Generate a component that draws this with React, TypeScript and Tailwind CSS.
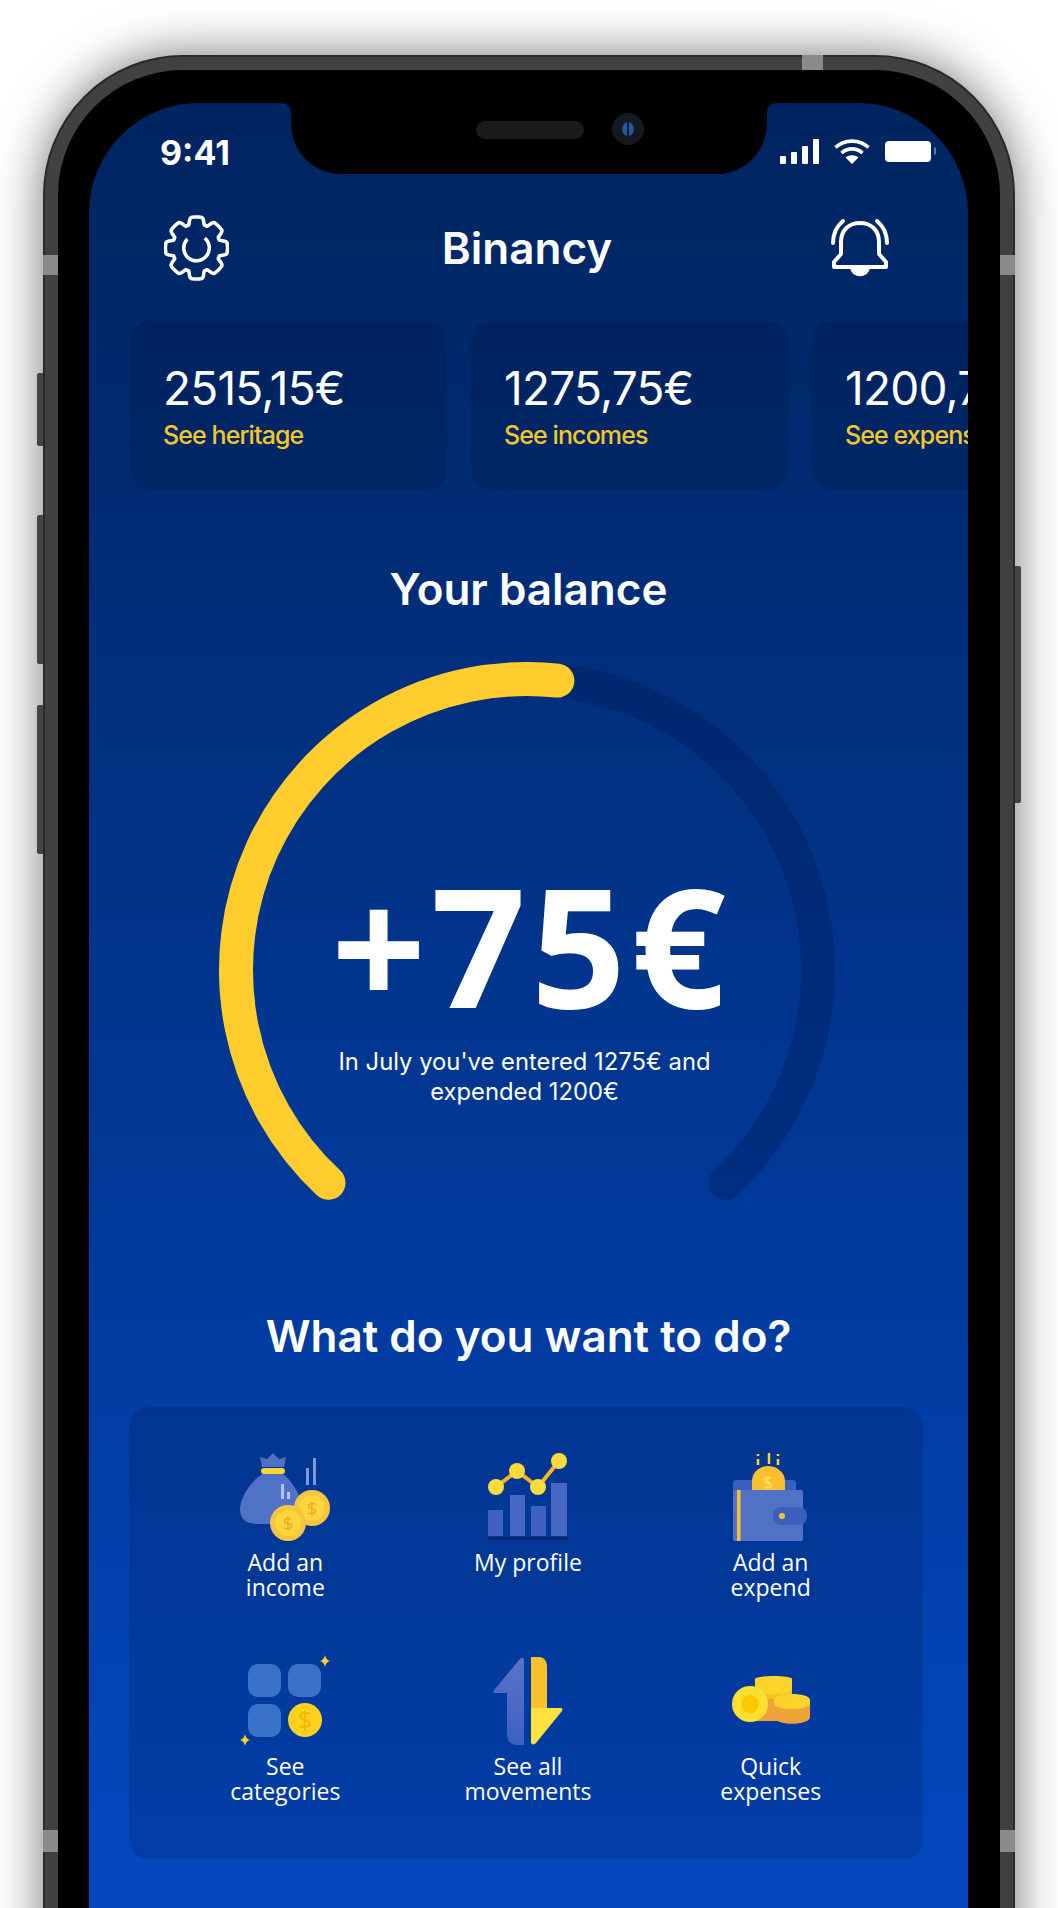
const cards = [
  { value: "2515,15€", label: "See heritage" },
  { value: "1275,75€", label: "See incomes" },
  { value: "1200,75€", label: "See expenses" },
];

// 8 flat rounded teeth on a ring, top tooth on the vertical axis
function gearPath(cx: number, cy: number) {
  const points: string[] = [];
  for (let i = 0; i < 320; i++) {
    const a = (i / 320) * Math.PI * 2;
    const t = Math.min(1, Math.max(0, (Math.abs(Math.cos(4 * a)) - 0.2) / 0.6));
    const r = 24.5 + 7 * t * t * (3 - 2 * t);
    points.push(`${(cx + r * Math.sin(a)).toFixed(2)} ${(cy - r * Math.cos(a)).toFixed(2)}`);
  }
  return `M${points.join("L")}Z`;
}

function polar(angle: number) {
  const a = (angle * Math.PI) / 180;
  return `${(323 + 291 * Math.sin(a)).toFixed(1)} ${(308 - 291 * Math.cos(a)).toFixed(1)}`;
}

function GearIcon() {
  return (
    <svg width="65" height="66" viewBox="0 0 66 66" fill="none" stroke="white" strokeWidth="3.6">
      <path d={gearPath(33, 33)} strokeLinejoin="round" />
      <circle cx="33" cy="33" r="13" strokeDasharray="62 20" transform="rotate(-50 33 33)" />
    </svg>
  );
}

function BellIcon() {
  return (
    <svg width="58" height="60" viewBox="0 0 58 60" fill="none" stroke="white" strokeWidth="4" strokeLinecap="round">
      <path d="M10 36V24C10 12 18 5 29 5S48 12 48 24V36L55 44V49H3V44Z" strokeLinejoin="round" />
      <path d="M2 25C2 15 6 8 12 3" />
      <path d="M56 25C56 15 52 8 46 3" />
      <path d="M19 50C21 61 37 61 39 50Z" fill="white" stroke="none" />
    </svg>
  );
}

function IncomeIcon() {
  return (
    <svg width="90" height="88" viewBox="0 0 90 88">
      <path d="M22 14L20 4L27 6L33 0L39 6L46 4L44 14Z" fill="#4f6fc4" />
      <path d="M24 20C10 28 0 45 0 56C0 68 8 71 20 71H50C65 71 65 60 62 50C58 38 50 26 42 20Z" fill="#5072c6" />
      <rect x="21" y="15" width="24" height="6" rx="3" fill="#fcd535" />
      <rect x="41" y="31" width="3" height="15" fill="#b4c4ea" />
      <rect x="47" y="39" width="3" height="7" fill="#b4c4ea" />
      <rect x="66" y="15" width="3" height="17" fill="#7f98d8" />
      <rect x="73" y="5" width="3" height="27" fill="#7f98d8" />
      <circle cx="72" cy="55" r="18" fill="#f9c440" />
      <circle cx="72" cy="55" r="13" fill="#fdd63a" />
      <text x="72" y="62" textAnchor="middle" fontSize="19" fill="#f0a92e" fontFamily="Open Sans, sans-serif">$</text>
      <circle cx="48" cy="70" r="18" fill="#f9c440" />
      <circle cx="48" cy="70" r="13" fill="#fdd63a" />
      <text x="48" y="77" textAnchor="middle" fontSize="19" fill="#f0a92e" fontFamily="Open Sans, sans-serif">$</text>
    </svg>
  );
}

function ProfileIcon() {
  return (
    <svg width="80" height="88" viewBox="0 0 80 88">
      <rect x="0" y="57" width="15" height="26" fill="#3f62c2" />
      <rect x="22" y="42" width="15" height="41" fill="#4767c4" />
      <rect x="43" y="53" width="15" height="30" fill="#3f62c2" />
      <rect x="63" y="30" width="16" height="53" fill="#4767c4" />
      <rect x="0" y="84" width="80" height="3" fill="#03296c" />
      <path d="M8 34L29 18L50 34L71 8" fill="none" stroke="#f9b52a" strokeWidth="4" />
      <circle cx="8" cy="34" r="8" fill="#fcdc3c" />
      <circle cx="29" cy="18" r="8" fill="#fcdc3c" />
      <circle cx="50" cy="34" r="8" fill="#fcdc3c" />
      <circle cx="71" cy="8" r="8" fill="#fcdc3c" />
    </svg>
  );
}

function ExpendIcon() {
  return (
    <svg width="76" height="90" viewBox="0 0 76 90">
      <path d="M25 2V4M25 7V13M36 1V12M45 2V4M45 7V13" stroke="#fcd535" strokeWidth="2.5" />
      <rect x="0" y="28" width="63" height="14" rx="3" fill="#3a5fc0" />
      <path d="M19 38V29C19 20 27 14 35 14S52 20 52 29V38Z" fill="#fbc02d" />
      <text x="35" y="36" textAnchor="middle" fontSize="17" fill="#fde26a" fontFamily="Open Sans, sans-serif">$</text>
      <rect x="0" y="38" width="70" height="51" rx="2" fill="#5272c6" />
      <rect x="4" y="38" width="3.5" height="51" fill="#fbc02d" />
      <rect x="40" y="55" width="34" height="18" rx="8" fill="#3c5fbe" />
      <circle cx="49" cy="64" r="3" fill="#fbc02d" />
    </svg>
  );
}

function CategoriesIcon() {
  return (
    <svg width="92" height="92" viewBox="0 0 92 92">
      <rect x="9" y="9" width="33" height="33" rx="10" fill="#3a72c9" />
      <rect x="49" y="9" width="33" height="33" rx="10" fill="#3a72c9" />
      <rect x="9" y="49" width="33" height="33" rx="10" fill="#3a72c9" />
      <circle cx="66" cy="65" r="17" fill="#fcd21f" />
      <text x="66" y="74" textAnchor="middle" fontSize="25" fill="#f5b400" fontFamily="Open Sans, sans-serif">$</text>
      <path d="M86 0Q87 5 91 6Q87 7 86 12Q85 7 81 6Q85 5 86 0Z" fill="#fcd21f" />
      <path d="M6 79Q7 84 11 85Q7 86 6 91Q5 86 1 85Q5 84 6 79Z" fill="#fcd21f" />
    </svg>
  );
}

function MovementsIcon() {
  return (
    <svg width="70" height="88" viewBox="0 0 70 88">
      <defs>
        <linearGradient id="upArrow" x1="0" y1="0" x2="0" y2="1">
          <stop offset="0" stopColor="#5a74c6" />
          <stop offset="1" stopColor="#3c60c2" />
        </linearGradient>
      </defs>
      <path d="M27 2C29 0 31 0 31 4V88H24C18 88 14 84 14 78V36H2C0 36 0 34 1 33Z" fill="url(#upArrow)" />
      <path d="M38 0H46C51 0 54 4 54 10V51H38Z" fill="#fbc02d" />
      <path d="M38 51H68C69 51 70 52 69 54L43 86C41 88 38 88 38 85Z" fill="#fde23f" />
    </svg>
  );
}

function QuickIcon() {
  return (
    <svg width="80" height="56" viewBox="0 0 80 56">
      <path d="M24 14V48H61V14Z" fill="#eea33a" />
      <ellipse cx="42.5" cy="20" rx="18.5" ry="6" fill="#fbbf24" />
      <path d="M24 6C24 2 61 2 61 6V16C61 23 24 23 24 16Z" fill="#fdd42a" />
      <circle cx="19" cy="31" r="18" fill="#fbe02f" />
      <circle cx="19" cy="31" r="9" fill="#ffc800" />
      <path d="M43 28V44C43 53 79 53 79 44V28Z" fill="#eea33a" />
      <path d="M43 27C43 19 79 19 79 27V30C79 38 43 38 43 30Z" fill="#fdd42a" />
    </svg>
  );
}

const actions = [
  { icon: <IncomeIcon />, lines: ["Add an", "income"] },
  { icon: <ProfileIcon />, lines: ["My profile"] },
  { icon: <ExpendIcon />, lines: ["Add an", "expend"] },
  { icon: <CategoriesIcon />, lines: ["See", "categories"] },
  { icon: <MovementsIcon />, lines: ["See all", "movements"] },
  { icon: <QuickIcon />, lines: ["Quick", "expenses"] },
];

export default function App() {
  return (
    <div className="h-[1908px] overflow-hidden bg-white pl-[43px] pt-[55px] font-[Inter,sans-serif]">
      <div className="relative h-[2100px] w-[972px] rounded-[140px] border-2 border-[#2a2a2a] bg-[#414141] p-[13px] shadow-[0_0_48px_rgba(0,0,0,0.55)]">
        {/* side buttons */}
        <div className="absolute left-[-8px] top-[316px] h-[73px] w-[6px] rounded-l-[2px] bg-[#444444]" />
        <div className="absolute left-[-8px] top-[458px] h-[149px] w-[6px] rounded-l-[2px] bg-[#444444]" />
        <div className="absolute left-[-8px] top-[648px] h-[149px] w-[6px] rounded-l-[2px] bg-[#444444]" />
        <div className="absolute right-[-8px] top-[509px] h-[237px] w-[6px] rounded-r-[2px] bg-[#444444]" />
        {/* antenna bands */}
        <div className="absolute left-[757px] top-[-2px] h-[15px] w-[21px] bg-[#8a8a8a]" />
        <div className="absolute left-[-2px] top-[198px] h-[20px] w-[15px] bg-[#8a8a8a]" />
        <div className="absolute right-[-2px] top-[198px] h-[20px] w-[15px] bg-[#8a8a8a]" />
        <div className="absolute left-[-2px] top-[1773px] h-[22px] w-[15px] bg-[#8a8a8a]" />
        <div className="absolute right-[-2px] top-[1773px] h-[22px] w-[15px] bg-[#8a8a8a]" />

        <div className="h-full rounded-[125px] bg-black pl-[31px] pr-[32px] pt-[33px]">
          <div className="relative h-[1900px] w-[879px] overflow-hidden rounded-t-[110px] bg-gradient-to-b from-[#00245f] to-[#0449c6] text-white">
            {/* notch */}
            <svg className="absolute left-[192px] top-0" width="496" height="71" viewBox="0 0 496 71">
              <path d="M0 0H496Q486 0 486 10V20C486 50 462 71 436 71H60C34 71 10 50 10 20V10Q10 0 0 0Z" fill="black" />
              <rect x="195" y="18" width="108" height="18" rx="9" fill="#1b1b1b" />
              <circle cx="347" cy="26" r="16" fill="#15181f" />
              <ellipse cx="347" cy="26" rx="6" ry="7" fill="#1f5a9c" />
              <rect x="346" y="19" width="2" height="14" fill="#0b1b33" />
            </svg>

            {/* status bar */}
            <div className="mt-[32px] flex h-[36px] items-center justify-between pl-[71px] pr-[32px]">
              <span className="text-[34px] font-bold leading-none">9:41</span>
              <div className="mb-[4px] flex items-center gap-[15px]">
                <div className="flex h-[25px] items-end gap-[5px]">
                  <div className="h-[8px] w-[6px] rounded-[1px] bg-white" />
                  <div className="h-[12px] w-[6px] rounded-[1px] bg-white" />
                  <div className="h-[18px] w-[6px] rounded-[1px] bg-white" />
                  <div className="h-[25px] w-[6px] rounded-[1px] bg-white" />
                </div>
                <svg width="36" height="25" viewBox="0 0 36 25" fill="none" stroke="white" strokeWidth="3.6">
                  <path d="M1.5 8.5C10.5 0 25.5 0 34.5 8.5" />
                  <path d="M7.5 14C13.5 8.5 22.5 8.5 28.5 14" />
                  <path d="M18 25L11.5 18.5C15 15.5 21 15.5 24.5 18.5Z" fill="white" stroke="none" />
                </svg>
                <div className="flex items-center gap-[3px]">
                  <div className="h-[21px] w-[46px] rounded-[4px] bg-white" />
                  <div className="h-[8px] w-[2px] rounded-r-[2px] bg-[#5a7cb8]" />
                </div>
              </div>
            </div>

            {/* header */}
            <div className="mt-[42px] flex h-[70px] items-center justify-between pl-[75px] pr-[79px]">
              <GearIcon />
              <span className="mr-[6px] text-[44px] font-semibold leading-none">Binancy</span>
              <BellIcon />
            </div>

            {/* totals */}
            <div className="mt-[38px] flex gap-[24px] pl-[41px]">
              {cards.map((card) => (
                <div key={card.label} className="h-[169px] w-[317px] shrink-0 rounded-[20px] bg-black/10 pl-[33px] pt-[42px]">
                  <div className="text-[46px] leading-[50px] tracking-[-0.8px]">{card.value}</div>
                  <div className="mt-[7px] text-[25px] font-medium leading-[30px] tracking-[-0.9px] text-[#f2c62c]">{card.label}</div>
                </div>
              ))}
            </div>

            <h2 className="mt-[74px] text-center text-[44px] font-semibold leading-[50px]">Your balance</h2>

            {/* balance gauge */}
            <div className="mx-auto mt-[47px] grid h-[650px] w-[650px]">
              <svg className="col-start-1 row-start-1 mt-[1px]" width="650" height="650" viewBox="0 0 650 650" fill="none" strokeWidth="34" strokeLinecap="round">
                <path d={`M${polar(6)}A291 291 0 0 1 ${polar(137)}`} stroke="#001f5c" strokeOpacity="0.4" />
                <path d={`M${polar(-137)}A291 291 0 0 1 ${polar(6)}`} stroke="#ffcd2e" />
              </svg>
              <div className="col-start-1 row-start-1 flex flex-col items-center pt-[198px]">
                <div className="pl-[5px] font-['Open_Sans',sans-serif] text-[166px] font-bold leading-[170px] tracking-[5px]">+75€</div>
                <p className="mr-[8px] mt-[18px] w-[450px] text-center text-[23.8px] leading-[30px]">
                  In July you've entered 1275€ and expended 1200€
                </p>
              </div>
            </div>

            <h2 className="text-center text-[44px] font-semibold leading-[50px]">What do you want to do?</h2>

            {/* actions */}
            <div className="mx-[40px] mt-[46px] grid h-[452px] w-[794px] grid-cols-3 auto-rows-[204px] rounded-[20px] bg-black/12 pl-[35px] pr-[31px] pt-[45px]">
              {actions.map((action) => (
                <div key={action.lines.join(" ")} className="flex flex-col items-center">
                  <div className="flex h-[90px] items-center justify-center">{action.icon}</div>
                  <div className="mt-[8px] text-center font-['Open_Sans',sans-serif] text-[23px] leading-[25px]">
                    {action.lines.map((line) => (
                      <div key={line}>{line}</div>
                    ))}
                  </div>
                </div>
              ))}
            </div>
          </div>
        </div>
      </div>
    </div>
  );
}
